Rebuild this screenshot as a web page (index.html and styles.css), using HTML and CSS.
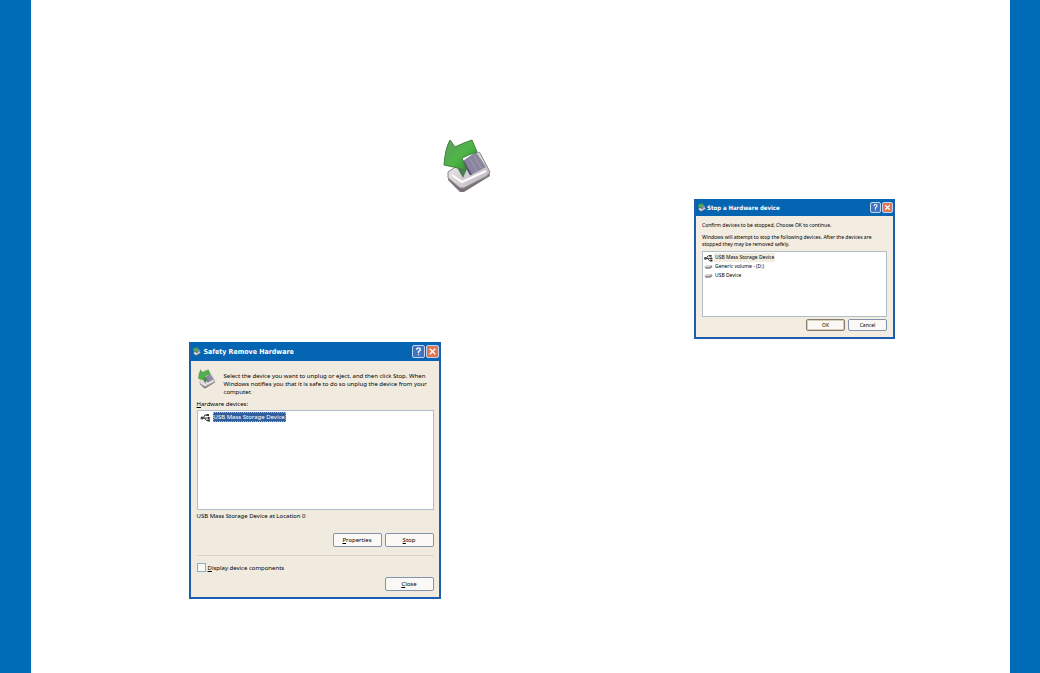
FILE: index.html
```
<!DOCTYPE html>
<html lang="en">
<head>
    <meta charset="UTF-8">
    <meta name="viewport" content="width=device-width, initial-scale=1.0">
    <title>Safety Remove Hardware</title>
    <link rel="stylesheet" href="styles.css">
</head>
<body>
    <!-- shared icons -->
    <svg class="defs" width="0" height="0" aria-hidden="true">
        <defs>
            <linearGradient id="green" x1="0" y1="0" x2="1" y2="1">
                <stop offset="0" stop-color="#5f9c60"/>
                <stop offset=".5" stop-color="#4fb548"/>
                <stop offset="1" stop-color="#2b8a2d"/>
            </linearGradient>
            <linearGradient id="metal" x1="0" y1="0" x2="1" y2="1">
                <stop offset="0" stop-color="#f6f4f6"/>
                <stop offset="1" stop-color="#b5b0b5"/>
            </linearGradient>
            <symbol id="eject" viewBox="0 0 50 56">
                <path d="M5 42L17 54 21 54 47 38 46 34 19 47 6 37z" fill="#777277"/>
                <path d="M5 34L11 30 34 14 37 15 47 34 44 38 21 50 17 50 5 40z" fill="url(#metal)" stroke="#8b868b" stroke-width="1"/>
                <path d="M20 23L33 14 43 29 28 37z" fill="#8a86a0"/>
                <path d="M27 21l7 12M31 18l7 12" stroke="#a19db4" stroke-width="1"/>
                <path d="M20 23l8 14" stroke="#55506c" stroke-width="2"/>
                <path d="M9 37L19 44 43 33" fill="none" stroke="#fff" stroke-width="2"/>
                <path d="M12 26L20 40 24 31 19 20z" fill="#4c7c55"/>
                <path d="M7 2L12 9Q20 5 29 2L34 14Q25 17 19 20L23 32Q11 29 1 27Q2 11 7 2z" fill="url(#green)" stroke="#43803f" stroke-width="1"/>
            </symbol>
            <symbol id="usb" viewBox="0 0 20 18">
                <path d="M2 10H18M5 10L9 4H13M8 10L12 15H15" fill="none" stroke="#333" stroke-width="2"/>
                <circle cx="3" cy="10" r="3" fill="#444"/>
                <path d="M12 2h5v4h-5zM14 13h5v4h-5zM15 7l5 3-5 3z" fill="#333"/>
            </symbol>
            <symbol id="drive" viewBox="0 0 20 18">
                <path d="M1 8L7 5H17L19 9 14 13H4z" fill="#8c8c8c"/>
                <path d="M2 8L7 5H17L13 9H4z" fill="#ddd"/>
            </symbol>
        </defs>
    </svg>

    <main class="page">
        <section class="column column-left">
            <svg class="tray-icon" role="img" aria-label="Remove hardware"><use href="#eject"/></svg>

            <div class="dialog remove" role="dialog" aria-labelledby="remove-title">
                <header class="titlebar">
                    <svg class="title-icon"><use href="#eject"/></svg>
                    <h2 id="remove-title">Safety Remove Hardware</h2>
                    <button class="title-btn help" aria-label="Help"><svg viewBox="0 0 12 12"><path d="M4 4Q4 2 6 2T8 4Q8 5 6 6V8M6 9V10"/></svg></button>
                    <button class="title-btn close" aria-label="Close"><svg viewBox="0 0 12 12"><path d="M3 3L9 9M9 3L3 9"/></svg></button>
                </header>
                <div class="content">
                    <div class="intro">
                        <svg class="intro-icon"><use href="#eject"/></svg>
                        <p>Select the device you want to unplug or eject, and then click Stop. When<br>Windows notifies you that it is safe to do so unplug the device from your<br>computer.</p>
                    </div>
                    <p class="list-label" id="devices-label"><u>H</u>ardware devices:</p>
                    <ul class="list" aria-labelledby="devices-label">
                        <li class="selected"><svg><use href="#usb"/></svg><span>USB Mass Storage Device</span></li>
                    </ul>
                    <p class="status">USB Mass Storage Device at Location 0</p>
                    <div class="buttons">
                        <button class="btn"><u>P</u>roperties</button>
                        <button class="btn"><u>S</u>top</button>
                    </div>
                    <hr>
                    <label class="check"><input type="checkbox"><span><u>D</u>isplay device components</span></label>
                    <div class="buttons">
                        <button class="btn"><u>C</u>lose</button>
                    </div>
                </div>
            </div>
        </section>

        <section class="column column-right">
            <div class="dialog stop" role="dialog" aria-labelledby="stop-title">
                <header class="titlebar">
                    <svg class="title-icon"><use href="#eject"/></svg>
                    <h2 id="stop-title">Stop a Hardware device</h2>
                    <button class="title-btn help" aria-label="Help"><svg viewBox="0 0 12 12"><path d="M4 4Q4 2 6 2T8 4Q8 5 6 6V8M6 9V10"/></svg></button>
                    <button class="title-btn close" aria-label="Close"><svg viewBox="0 0 12 12"><path d="M3 3L9 9M9 3L3 9"/></svg></button>
                </header>
                <div class="content">
                    <p>Confirm devices to be stopped, Choose OK to continue.</p>
                    <p class="note">Windows will attempt to stop the following devices. After the devices are<br>stopped they may be removed safely.</p>
                    <ul class="list">
                        <li class="current"><svg><use href="#usb"/></svg><span>USB Mass Storage Device</span></li>
                        <li><svg><use href="#drive"/></svg><span>Generic volume - (D:)</span></li>
                        <li><svg><use href="#drive"/></svg><span>USB Device</span></li>
                    </ul>
                    <div class="buttons">
                        <button class="btn default">OK</button>
                        <button class="btn">Cancel</button>
                    </div>
                </div>
            </div>
        </section>
    </main>
</body>
</html>
```
FILE: styles.css
```
* {
    box-sizing: border-box;
}

body {
    margin: 0;
    background-color: #fff;
    color: #000;
    font-family: "Noto Sans", "Open Sans", sans-serif;
    font-size: 6px;
    line-height: 8px;
}

h2, p, ul {
    margin: 0;
    padding: 0;
}

svg {
    display: block;
    flex: none;
}

.defs {
    position: absolute;
}

.page {
    display: grid;
    grid-template-columns: 1fr 1fr;
    min-height: 100vh;
    border-left: 31px solid #006cb7;
    border-right: 30px solid #006cb7;
}

.column {
    display: flex;
    flex-direction: column;
    align-items: flex-end;
}

.column-left {
    padding: 138px 28px 74px 0;
}

.column-right {
    padding: 199px 115px 74px 0;
}

.tray-icon {
    width: 50px;
    height: 56px;
}

/* dialogs */
.dialog {
    border: 2px solid #1d5dad;
    border-top: none;
    background-color: #f0ebde;
    white-space: nowrap;
}

.remove {
    width: 252px;
    margin: 148px 52px 0 0;
}

.stop {
    width: 201px;
    background-color: #f3ece0;
    font-size: 5px;
    line-height: 7px;
}

.titlebar {
    display: flex;
    align-items: center;
    gap: 1px;
    height: 19px;
    padding: 0 0 0 2px;
    background-color: #0565b2;
    color: #fff;
}

.titlebar h2 {
    flex: 1;
    margin-left: 2px;
    font-family: "DejaVu Sans Condensed", "DejaVu Sans", sans-serif;
    font-size: 7px;
    line-height: 10px;
}

.title-icon {
    width: 8px;
    height: 9px;
}

.title-btn {
    width: 13px;
    height: 13px;
    padding: 0;
    border: 1px solid #c3d5ee;
    border-radius: 2px;
    background-color: #3e74c1;
}

.title-btn.close {
    background-color: #df7657;
}

.title-btn svg {
    width: 11px;
    height: 11px;
    fill: none;
    stroke: #fff;
    stroke-width: 1.5;
}

.stop .titlebar {
    height: 17px;
}

.stop .titlebar h2 {
    margin-left: 0;
    font-size: 6px;
}

.stop .title-btn {
    width: 11px;
    height: 11px;
}

.stop .title-btn svg {
    width: 9px;
    height: 9px;
}

.content {
    padding: 11px 5px 6px 6px;
}

.stop .content {
    padding: 6px;
}

.intro {
    display: flex;
    gap: 7px;
}

.intro-icon {
    width: 20px;
    height: 20px;
    margin-top: -3px;
}

.list-label {
    margin: 4px 0 2px;
}

.note {
    margin: 5px 0 3px;
}

/* device lists */
.list {
    height: 100px;
    padding: 1px 2px;
    border: 1px solid #b1bdc9;
    background-color: #fff;
    list-style: none;
}

.list li {
    display: flex;
    align-items: center;
    gap: 2px;
    height: 10px;
}

.list svg {
    width: 11px;
    height: 9px;
}

.list span {
    padding: 1px;
}

.list .selected span {
    background-color: #315f9e;
    color: #fff;
    outline: 1px dotted #9db4d2;
    outline-offset: -1px;
}

.list .current span {
    background-color: #f2eddf;
}

.stop .list {
    height: 66px;
    padding: 1px;
}

.stop .list li {
    height: 9px;
    gap: 1px;
}

.stop .list svg {
    width: 9px;
    height: 8px;
}

.status {
    margin: 2px 0 13px;
}

/* controls */
.buttons {
    display: flex;
    justify-content: flex-end;
    gap: 3px;
}

.btn {
    width: 49px;
    height: 14px;
    padding: 0;
    border: 1px solid #8293ab;
    border-radius: 2px;
    background-color: #faf9f5;
    color: #000;
    font: inherit;
}

.stop .buttons {
    margin-top: 2px;
}

.stop .btn {
    width: 39px;
    height: 12px;
}

.stop .btn.default {
    border-color: #857e70;
    box-shadow: inset 0 0 0 1px #d9cfb8;
}

hr {
    height: 1px;
    margin: 8px 0 7px;
    border: none;
    background-color: #d8d4c8;
}

.check {
    display: flex;
    align-items: center;
    gap: 2px;
    margin-bottom: 5px;
}

.check input {
    appearance: none;
    width: 9px;
    height: 9px;
    margin: 0;
    border: 1px solid #92abc3;
    background-color: #f8f8f4;
}
```
